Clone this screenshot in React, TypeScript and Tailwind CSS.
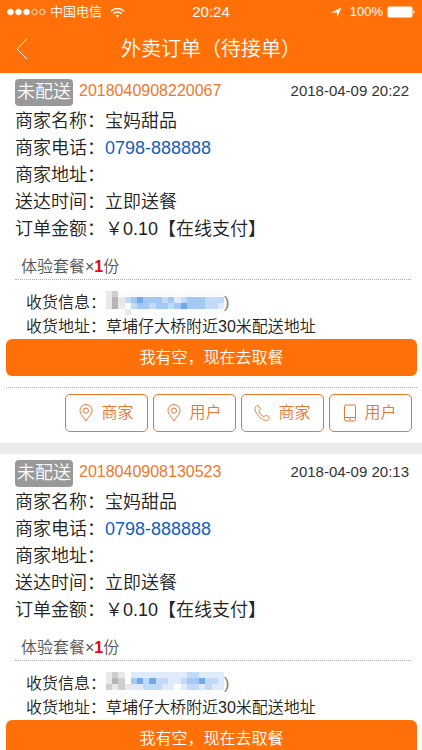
import React from "react";

interface Order {
  id: string;
  time: string;
  mosaic: string[];
}

// ── Mosaic palette, one letter per cell ──────────────────────────
const SHADES: Record<string, string> = {
  g: "#b5b5b5",
  h: "#cfcfcf",
  i: "#e8e8e8",
  w: "#fbfcfd",
  a: "#dfeafa",
  b: "#c1daf7",
  c: "#a3c8f3",
  d: "#72a9ea",
};

const ORDERS: Order[] = [
  {
    id: "2018040908220067",
    time: "2018-04-09 20:22",
    mosaic: ["ihwwwwwwwwwwwwwwwww", "igibcdcccbcabcccbbb", "igiwbccbccbcdcccbba", "wwwiwwwwwwwwwwwwwww"],
  },
  {
    id: "2018040908130523",
    time: "2018-04-09 20:13",
    mosaic: ["ihiwaaaaaaaaabbaaaa", "ighwcdbdbbaabccdbba", "hihiaabbbaawabbabaa", "wwwwwwwwwwwwwwwwwww"],
  },
];

const Mosaic: React.FC<{ rows: string[] }> = ({ rows }) => (
  <svg width="118" height="24" viewBox="0 0 19 4" preserveAspectRatio="none" shapeRendering="crispEdges" aria-hidden="true">
    {rows.map((row, y) =>
      row.split("").map((cell, x) => (
        <rect key={`${x}-${y}`} x={x} y={y} width="1" height="1" fill={SHADES[cell]} />
      )),
    )}
  </svg>
);

// ── Icons ────────────────────────────────────────────────────────
const iconProps = { fill: "none", stroke: "currentColor", "aria-hidden": true } as const;

const PinIcon = () => (
  <svg {...iconProps} width="14" height="18" viewBox="0 0 14 18" className="shrink-0">
    <path d="M7 17C5.300 13.500 1 10.200 1 6.600a6 6 0 0 1 12 0C13 10.200 8.700 13.500 7 17Z" />
    <circle cx="7" cy="6.600" r="2.600" />
  </svg>
);

const CallIcon = () => (
  <svg {...iconProps} width="16" height="18" viewBox="0 0 16 18" className="shrink-0">
    <path d="M1.800 2.600C2.800 1.300 4.100 1 4.800 2L6.300 4.600C6.800 5.600 5 6.400 5 7.300C5.200 9.200 8 12.200 9.900 12.500C10.900 12.500 11.500 10.800 12.600 11.300L14.900 12.900C16 13.800 15 15.400 13.500 16.100C11.500 17 8 15.700 4.700 12.100C1.300 8.400 .2 4.800 1.800 2.600Z" />
  </svg>
);

const MobileIcon = () => (
  <svg {...iconProps} width="12" height="18" viewBox="0 0 12 18" className="shrink-0">
    <rect x=".5" y="1" width="11" height="16" rx="1.500" />
    <path d="M.5 13.500h11" />
    <circle cx="6" cy="15.200" r=".5" />
  </svg>
);

const ACTIONS = [
  { key: "shop-map", label: "商家", icon: <PinIcon /> },
  { key: "user-map", label: "用户", icon: <PinIcon /> },
  { key: "shop-call", label: "商家", icon: <CallIcon /> },
  { key: "user-call", label: "用户", icon: <MobileIcon /> },
];

const StatusBar = () => (
  <div className="grid h-6 grid-cols-3 items-center px-[7px] text-[13px] leading-6">
    <div className="flex items-center gap-1">
      <svg width="39" height="8" viewBox="0 0 39 8" aria-hidden="true" fill="white" stroke="white">
        <circle cx="3.500" cy="4" r="2.800" />
        <circle cx="11.500" cy="4" r="2.800" />
        <circle cx="19.500" cy="4" r="2.800" />
        <circle cx="27.500" cy="4" r="2.700" fill="none" strokeWidth=".8" />
        <circle cx="35.300" cy="4" r="2.700" fill="none" strokeWidth=".8" />
      </svg>
      <span className="whitespace-nowrap">中国电信</span>
      <svg width="15" height="11" viewBox="0 0 15 11" className="ml-1 shrink-0" aria-hidden="true" fill="none" stroke="white" strokeWidth="1.600">
        <path d="M1 4.200a9.200 9.200 0 0 1 13 0M3.500 6.700a5.700 5.700 0 0 1 8 0" />
        <path d="M5.500 8.600a2.900 2.900 0 0 1 4 0l-2 2z" fill="white" stroke="none" />
      </svg>
    </div>
    <div className="text-center text-[15px] leading-6">20:24</div>
    <div className="flex items-center justify-end gap-1">
      <svg width="11" height="11" viewBox="0 0 11 11" className="mr-1" aria-hidden="true" fill="white">
        <path d="M10.500 .5L6 10.500V5.400H.5z" />
      </svg>
      <span>100%</span>
      <svg width="28" height="12" viewBox="0 0 28 12" aria-hidden="true" fill="white">
        <rect x=".5" y=".5" width="25" height="11" rx="2" />
        <path d="M26.500 4c1.500.5 1.500 3.500 0 4z" />
      </svg>
    </div>
  </div>
);

const InfoRow: React.FC<{ label: string; children?: React.ReactNode }> = ({ label, children }) => (
  <div className="flex">
    <dt className="shrink-0">{label}：</dt>
    <dd className="flex">{children}</dd>
  </div>
);

const OrderCard: React.FC<{ order: Order }> = ({ order }) => (
  <article className="border-b-[11px] border-[#ececec] bg-white pt-1.5 pb-[11px]">
    <header className="flex items-start pr-[13px] pl-[15px]">
      <span className="rounded bg-[#999] px-0.5 text-[18px] leading-[27px] text-white">未配送</span>
      <span className="ml-1.5 text-base leading-6 text-[#f2762a]">{order.id}</span>
      <time className="ml-auto text-[15px] leading-6 text-[#333]">{order.time}</time>
    </header>

    <dl className="px-[15px] pt-0.5 text-[18px] leading-[27px] text-[#222]">
      <InfoRow label="商家名称">宝妈甜品</InfoRow>
      <InfoRow label="商家电话">
        <a href="tel:0798-888888" className="text-[#1060c0]">0798-888888</a>
      </InfoRow>
      <InfoRow label="商家地址" />
      <InfoRow label="送达时间">立即送餐</InfoRow>
      <InfoRow label="订单金额">￥0.10【在线支付】</InfoRow>
    </dl>

    <p className="mr-[11px] ml-[15px] border-b border-dotted border-[#aaa] px-1.5 pt-3 text-base leading-6 text-[#555]">
      体验套餐×<b className="font-bold text-[#f00010]">1</b>份
    </p>

    <dl className="px-[26px] pt-[11px] text-base leading-6 text-[#222]">
      <InfoRow label="收货信息">
        <Mosaic rows={order.mosaic} />
        <span className="text-[#777]">)</span>
      </InfoRow>
      <InfoRow label="收货地址">草埔仔大桥附近30米配送地址</InfoRow>
    </dl>

    <div className="pr-[5px] pl-1.5">
      <button type="button" className="h-[37px] w-full rounded-md bg-[#ff7008] text-base text-white">
        我有空，现在去取餐
      </button>
    </div>

    <div className="mt-[11px] mr-[5px] ml-1.5 flex justify-end gap-[5px] border-t border-dotted border-[#aab] pt-1.5 pr-[5px]">
      {ACTIONS.map((action) => (
        <button
          key={action.key}
          type="button"
          className="flex h-[38px] w-[83px] items-center justify-center gap-2 rounded-[5px] border border-solid border-[#f0732a] text-base text-[#ec7532]"
        >
          {action.icon}
          {action.label}
        </button>
      ))}
    </div>
  </article>
);

export default function App() {
  return (
    <div className="flex h-screen flex-col bg-white font-['Liberation_Sans','Noto_Sans_CJK_SC',sans-serif] font-[350]">
      <header className="shrink-0 bg-[#ff7008] text-white">
        <StatusBar />
        <div className="grid h-[49px] grid-cols-[40px_1fr_40px] items-center">
          <button type="button" aria-label="返回" className="flex h-full items-center pl-4">
            <svg width="12" height="22" viewBox="0 0 12 22" fill="none" stroke="white" aria-hidden="true">
              <path d="M11 1L1 11l10 10" />
            </svg>
          </button>
          <h1 className="text-center text-xl font-[350]">外卖订单（待接单）</h1>
        </div>
      </header>
      <main className="min-h-0 flex-1 overflow-y-auto [scrollbar-width:none]">
        {ORDERS.map((order) => (
          <OrderCard key={order.id} order={order} />
        ))}
      </main>
    </div>
  );
}
